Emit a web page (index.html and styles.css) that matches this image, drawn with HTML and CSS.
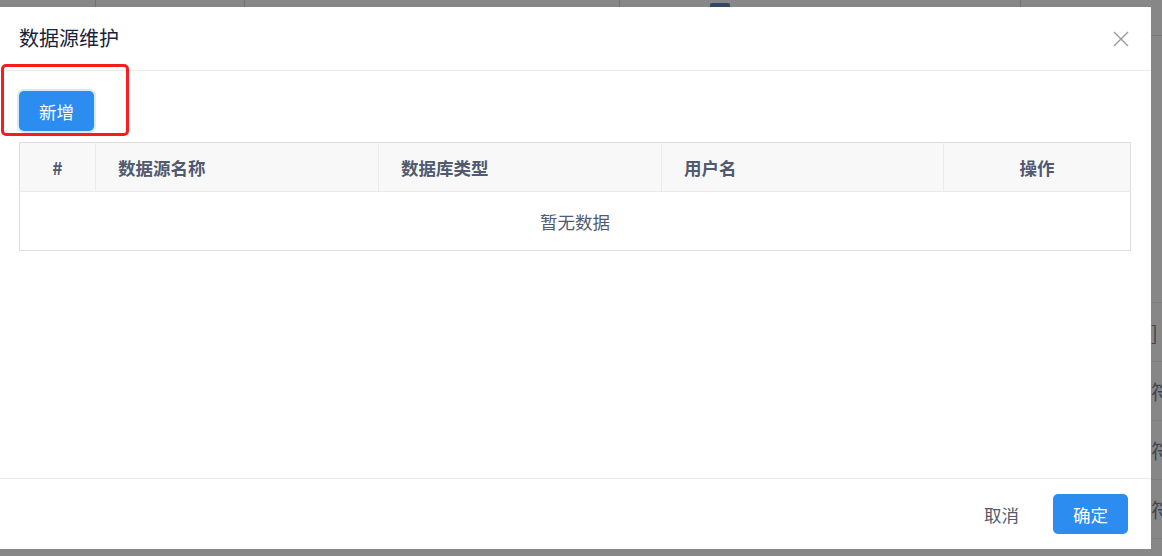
FILE: index.html
```html
<!DOCTYPE html>
<html lang="zh-CN">
<head>
  <meta charset="UTF-8">
  <meta name="viewport" content="width=device-width, initial-scale=1.0">
  <title>数据源维护</title>
  <link rel="stylesheet" href="styles.css">
</head>
<body>
  <!-- Page behind the dialog -->
  <div class="page">
    <div class="page-head">
      <div class="page-col c1"></div>
      <div class="page-col c2"></div>
      <div class="page-col c3"><span class="page-check"></span></div>
      <div class="page-col c4"></div>
      <div class="page-col c5"></div>
    </div>
    <div class="page-rows">
      <div class="page-row tall"></div>
      <div class="page-row"><span class="page-cell">]</span></div>
      <div class="page-row"><span class="page-cell">符合</span></div>
      <div class="page-row"><span class="page-cell">符合</span></div>
      <div class="page-row"><span class="page-cell">符合</span></div>
    </div>
  </div>

  <div class="mask"></div>

  <!-- Dialog -->
  <div class="modal">
    <div class="modal-header">
      <span class="modal-title">数据源维护</span>
      <span class="modal-close">
        <svg width="16" height="16" viewBox="0 0 16 16">
          <path d="M1 1 L15 15 M15 1 L1 15" stroke="#9a9a9a" stroke-width="1.4" fill="none"/>
        </svg>
      </span>
    </div>

    <div class="modal-body">
      <button class="btn btn-primary btn-focus">新增</button>

      <table class="data-table">
        <colgroup>
          <col style="width:76px">
          <col style="width:283px">
          <col style="width:283px">
          <col style="width:282px">
          <col style="width:187px">
        </colgroup>
        <thead>
          <tr>
            <th class="center">#</th>
            <th>数据源名称</th>
            <th>数据库类型</th>
            <th>用户名</th>
            <th class="center">操作</th>
          </tr>
        </thead>
        <tbody>
          <tr>
            <td colspan="5" class="empty">暂无数据</td>
          </tr>
        </tbody>
      </table>
    </div>

    <div class="modal-footer">
      <button class="btn btn-text">取消</button>
      <button class="btn btn-primary">确定</button>
    </div>
  </div>

  <!-- Annotation box -->
  <div class="mark"></div>
</body>
</html>
```

FILE: styles.css
```css
/* General */
html, body {
  margin: 0;
  padding: 0;
}

body {
  width: 1162px;
  height: 556px;
  overflow: hidden;
  background-color: #ffffff;
  font-family: "Noto Sans CJK SC", "Noto Sans", sans-serif;
  color: #515a6e;
}

/* Page behind */
.page {
  width: 1162px;
}

.page-head {
  display: flex;
  height: 35px;
  border-bottom: 1px solid #dcdee2;
}

.page-col {
  border-right: 1px solid #c8cad0;
  position: relative;
}

.c1 { width: 95px; }
.c2 { width: 148px; }
.c3 { width: 374px; }
.c4 { width: 400px; }
.c5 { flex: 1; border-right: none; }

.page-check {
  position: absolute;
  left: 465px;
  top: 3px;
  width: 20px;
  height: 20px;
  background-color: #2d5fa0;
  border-radius: 2px;
}

.page-rows {
  display: flex;
  flex-direction: column;
}

.page-row {
  height: 58px;
  border-bottom: 1px solid #e8eaec;
  display: flex;
  align-items: center;
  padding-left: 1151px;
}

.page-row.tall {
  height: 266px;
}

.page-cell {
  font-size: 20px;
  white-space: nowrap;
  color: #515a6e;
}

.mask {
  position: fixed;
  inset: 0;
  background-color: rgba(55, 55, 55, 0.6);
}

/* Modal */
.modal {
  position: fixed;
  top: 7px;
  left: 0;
  width: 1151px;
  height: 542px;
  background-color: #ffffff;
  display: flex;
  flex-direction: column;
}

.modal-header {
  height: 63px;
  border-bottom: 1px solid #e8eaec;
  display: flex;
  align-items: center;
  justify-content: space-between;
  padding: 0 22px 0 19px;
}

.modal-title {
  font-size: 20px;
  color: #17233d;
  line-height: 1;
  margin-top: -2px;
}

.modal-close {
  display: flex;
  margin-top: 1px;
}

.modal-body {
  flex: 1;
  padding: 20px 21px 0 19px;
}

.modal-footer {
  height: 70px;
  border-top: 1px solid #e8eaec;
  display: flex;
  align-items: center;
  justify-content: flex-end;
  gap: 14px;
  padding: 0 23px 0 0;
}

/* Buttons */
.btn {
  width: 75px;
  height: 40px;
  border: none;
  border-radius: 5px;
  font-family: "Noto Sans CJK SC", sans-serif;
  font-size: 17.5px;
  cursor: pointer;
  padding: 0;
}

.btn-primary {
  background-color: #2d8cf0;
  color: #ffffff;
}

.btn-focus {
  display: block;
  box-shadow: 0 0 0 2px rgba(45, 140, 240, 0.2);
  margin-bottom: 11px;
}

.btn-text {
  background-color: transparent;
  color: #515a6e;
}

/* Table */
.data-table {
  width: 1111px;
  table-layout: fixed;
  border-collapse: collapse;
  border: 1px solid #dcdee2;
  font-size: 17.5px;
}

.data-table th {
  height: 48px;
  background-color: #f8f8f9;
  border-right: 1px solid #e8eaec;
  border-bottom: 1px solid #e8eaec;
  font-weight: bold;
  color: #515a6e;
  text-align: left;
  padding: 0 22px;
}

.data-table th:last-child {
  border-right: 1px solid #dcdee2;
}

.data-table th.center {
  text-align: center;
  padding: 0;
}

.data-table td.empty {
  height: 58px;
  text-align: center;
  color: #515a6e;
  padding: 0;
}

/* Annotation */
.mark {
  position: fixed;
  left: 1px;
  top: 64px;
  width: 122px;
  height: 66px;
  border: 3px solid #f81d1d;
  border-radius: 5px;
}
```
